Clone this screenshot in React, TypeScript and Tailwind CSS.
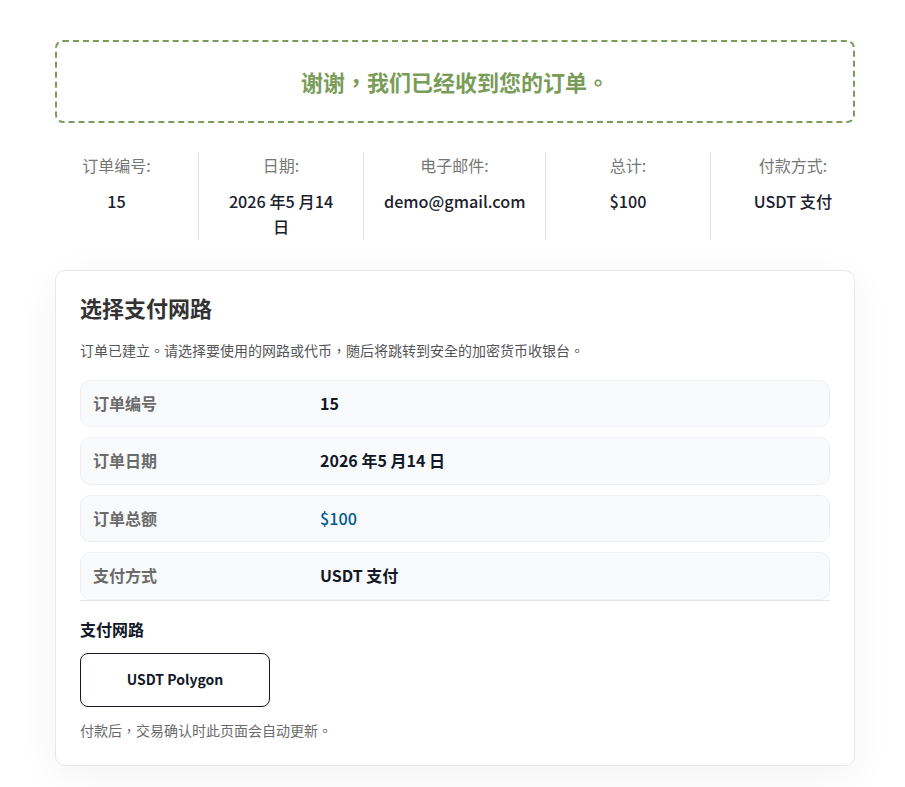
const font = { fontFamily: '"Noto Sans CJK TC", "Noto Sans", sans-serif' };

const overview = [
  { label: "订单编号:", value: "15", cls: "w-[143px] pr-5" },
  { label: "日期:", value: "2026 年5 月14 日", cls: "w-[165px] px-[24px] border-l border-[#e0e0e0]" },
  { label: "电子邮件:", value: "demo@gmail.com", cls: "w-[182px] px-5 border-l border-[#e0e0e0]" },
  { label: "总计:", value: "$100", cls: "w-[165px] px-5 border-l border-[#e0e0e0]" },
  { label: "付款方式:", value: "USDT 支付", cls: "w-[145px] pl-5 border-l border-[#e0e0e0]" },
];

const rows = [
  { label: "订单编号", value: "15", color: "text-[#111827]" },
  { label: "订单日期", value: "2026 年5 月14 日", color: "text-[#111827]" },
  { label: "订单总额", value: "$100", color: "text-[#005a8c] text-[16.2px] font-medium" },
  { label: "支付方式", value: "USDT 支付", color: "text-[#111827]" },
];

export default function App() {
  return (
    <div className="min-h-[787px] bg-white overflow-hidden" style={font}>
      <div className="w-[800px] ml-[55px] pt-10">
        {/* mensagem de sucesso */}
        <div className="h-[83px] flex items-center justify-center rounded-lg border-2 border-dashed border-[#7a9c59] text-[#7a9c59] text-[22px] font-bold">
          谢谢，我们已经收到您的订单。
        </div>

        <div className="flex mt-[29px] h-[88px] text-center">
          {overview.map((o) => (
            <div key={o.label} className={o.cls}>
              <div className="text-base leading-[26px] text-[#767676]">{o.label}</div>
              <div className="mt-[11px] text-[16.2px] leading-[25px] font-medium text-[#1a202c]">{o.value}</div>
            </div>
          ))}
        </div>

        <div className="mt-[30px] h-[496px] rounded-[10px] border border-[#e8e8ef] bg-white px-6 pt-[24px] shadow-[0_10px_40px_rgba(0,0,0,0.05)]">
          <h2 className="text-[22px] leading-[30px] -mt-[3px] font-bold text-[#333]">选择支付网路</h2>
          <p className="mt-[18px] text-sm leading-[20px] text-[#555]">
            订单已建立。请选择要使用的网路或代币，随后将跳转到安全的加密货币收银台。
          </p>

          <div className="mt-[19.6px] flex flex-col gap-[10px] border-b border-[#e5e7eb]">
            {rows.map((r) => (
              <div
                key={r.label}
                className="flex h-[47.5px] items-center rounded-[10px] border border-[#eef0f4] bg-[#f9fafc] px-3 pb-[1.2px] text-base"
              >
                <span className="w-[227px] font-bold text-[#6b6b6b]">{r.label}</span>
                <span className={`font-bold ${r.color}`}>{r.value}</span>
              </div>
            ))}
          </div>

          <div className="mt-[17.4px] text-base leading-[22px] font-bold text-[#111827]">支付网路</div>
          <button className="mt-[13px] block h-[54px] w-[190px] rounded-lg border border-[#111827] bg-white pb-[2px] text-sm font-bold text-[#111827]">
            USDT Polygon
          </button>
          <p className="mt-[13px] text-sm leading-[20px] text-[#6b6b6b]">付款后，交易确认时此页面会自动更新。</p>
        </div>
      </div>
    </div>
  );
}
